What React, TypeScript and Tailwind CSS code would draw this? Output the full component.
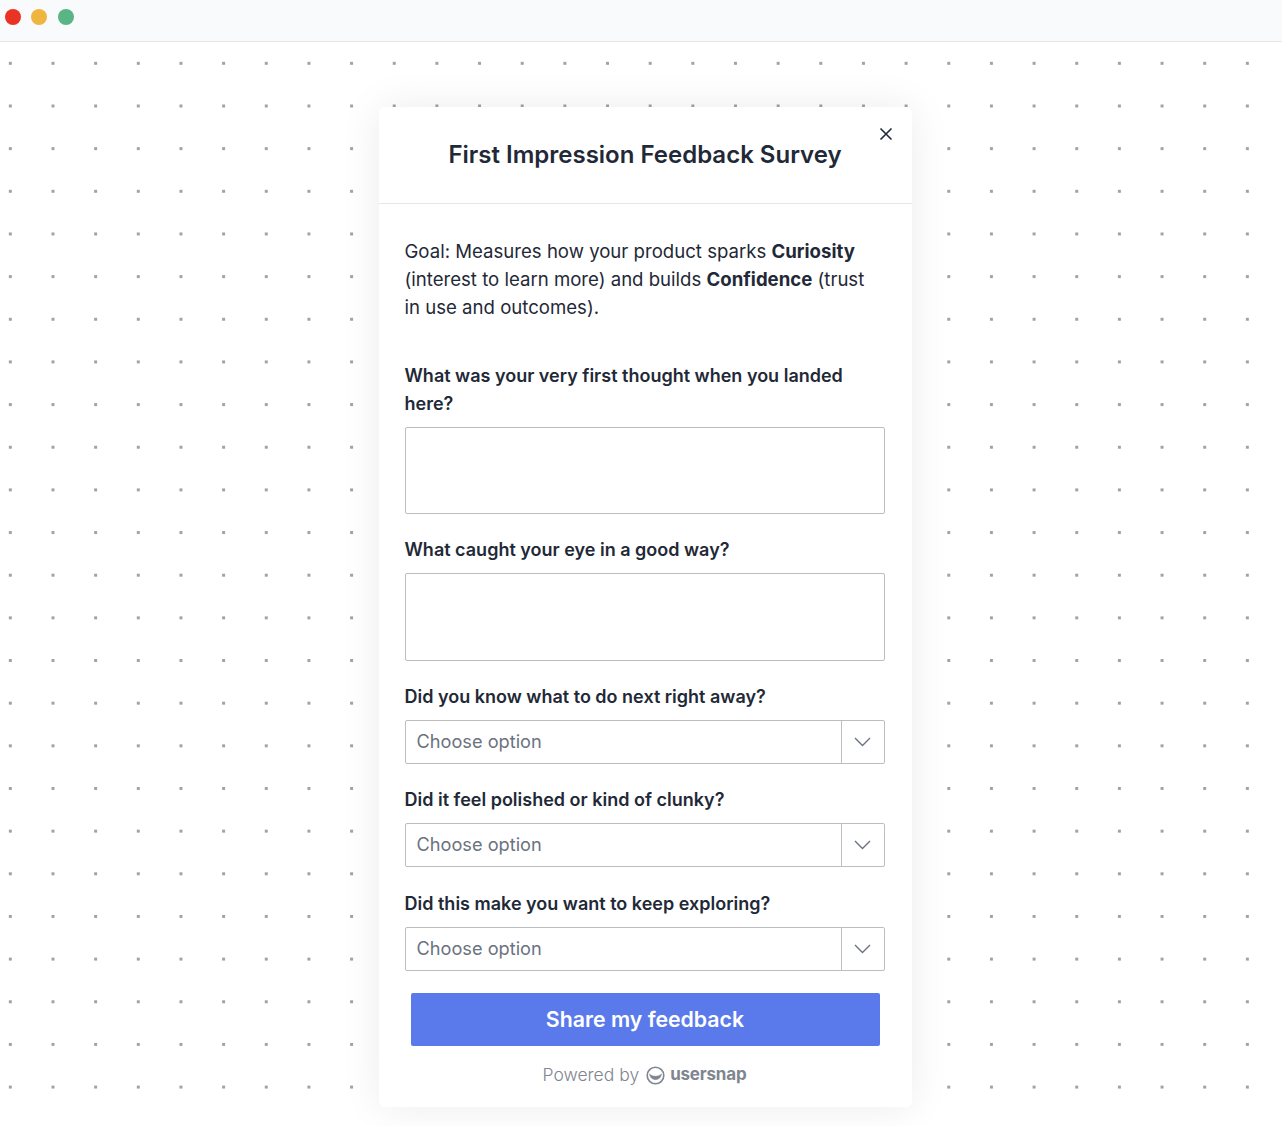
import React from 'react';

const SelectField: React.FC<{ label: string }> = ({ label }) => (
    <div>
        <label className="block text-[18px] leading-[28px] font-semibold text-[#1f2937]">{label}</label>
        <div className="mt-[9px] flex h-[44px] items-center border border-[#bdbdbd] rounded-[2px] bg-white">
            <span className="flex-1 pl-[11px] text-[18.2px] text-[#6b7280]">Choose option</span>
            <div className="flex h-full w-[43px] items-center justify-center border-l border-[#bdbdbd]">
                <svg className="h-[10px] w-[17px]" viewBox="0 0 17 10" fill="none" stroke="#6b7280" strokeWidth="1.4">
                    <path d="M1 1l7.5 7.5L16 1" />
                </svg>
            </div>
        </div>
    </div>
);

const TextField: React.FC<{ label: string; height: string }> = ({ label, height }) => (
    <div>
        <label className="block text-[18px] leading-[28px] font-semibold text-[#1f2937]">{label}</label>
        <textarea className={`mt-[9px] block w-full resize-none border border-[#bdbdbd] rounded-[2px] bg-white ${height}`} />
    </div>
);

const App: React.FC = () => {
    return (
        <div className="h-[1126px] overflow-hidden bg-white font-['Inter',sans-serif]">
            <div className="flex h-[42px] items-center gap-[10px] border-b border-[#e5e7eb] bg-[#f9fafb] pl-[5px] pb-[8px]">
                <span className="h-[16px] w-[16px] rounded-full bg-[#e93324]" />
                <span className="h-[16px] w-[16px] rounded-full bg-[#efb53e]" />
                <span className="h-[16px] w-[16px] rounded-full bg-[#5ab585] ml-[1px]" />
            </div>
            <div className="flex h-[1084px] justify-center pl-[8px] pt-[65px] bg-[radial-gradient(circle,#9ca3af_1.4px,transparent_1.6px)] bg-[length:42.67px_42.67px] bg-[position:-11px_0px]">
                <div className="relative h-[1000px] w-[533px] rounded-[6px] bg-white shadow-[0_0_40px_rgba(0,0,0,0.08)]">
                    <button className="absolute right-[19px] top-[20px] text-[#1f2937]">
                        <svg className="h-[14px] w-[14px]" viewBox="0 0 14 14" fill="none" stroke="currentColor" strokeWidth="1.6">
                            <path d="M1.5 1.5l11 11M12.5 1.5l-11 11" />
                        </svg>
                    </button>
                    <div className="flex h-[97px] items-center justify-center border-b border-[#e5e7eb]">
                        <h1 className="text-[24px] font-semibold text-[#1f2937]">First Impression Feedback Survey</h1>
                    </div>
                    <div className="pl-[26px] pr-[27px] pt-[33px]">
                        <p className="pr-[4px] text-[18.6px] leading-[28px] text-[#1f2937]">
                            Goal: Measures how your product sparks <b className="font-bold">Curiosity</b> (interest to learn more) and builds <b className="font-bold">Confidence</b> (trust in use and outcomes).
                        </p>
                        <div className="mt-[41px] flex flex-col">
                            <TextField label="What was your very first thought when you landed here?" height="h-[87px]" />
                            <div className="mt-[22px]">
                                <TextField label="What caught your eye in a good way?" height="h-[88px]" />
                            </div>
                            <div className="mt-[21.5px] flex flex-col gap-[22.5px]">
                                <SelectField label="Did you know what to do next right away?" />
                                <SelectField label="Did it feel polished or kind of clunky?" />
                                <SelectField label="Did this make you want to keep exploring?" />
                            </div>
                        </div>
                        <button className="mx-[6px] mt-[22.5px] block h-[53px] w-[469px] rounded-[2px] bg-[#5a7aec] text-[21.3px] font-semibold text-white">Share my feedback</button>
                        <div className="mt-[16px] flex items-center justify-center text-[#808590]">
                            <span className="text-[17.5px] font-light">Powered by</span>
                            <svg className="ml-[7px] h-[19px] w-[19px]" viewBox="0 0 19 19" fill="none" stroke="currentColor">
                                <circle cx="9.5" cy="9.5" r="8.3" strokeWidth="1.6" />
                                <path d="M3.5 8c1 7.5 11 7.5 12 0c-3 3-9 3-12 0z" fill="currentColor" strokeWidth="0.5" />
                            </svg>
                            <span className="ml-[5px] text-[17px] font-bold tracking-[-0.2px]">usersnap</span>
                        </div>
                    </div>
                </div>
            </div>
        </div>
    );
};

export default App;
